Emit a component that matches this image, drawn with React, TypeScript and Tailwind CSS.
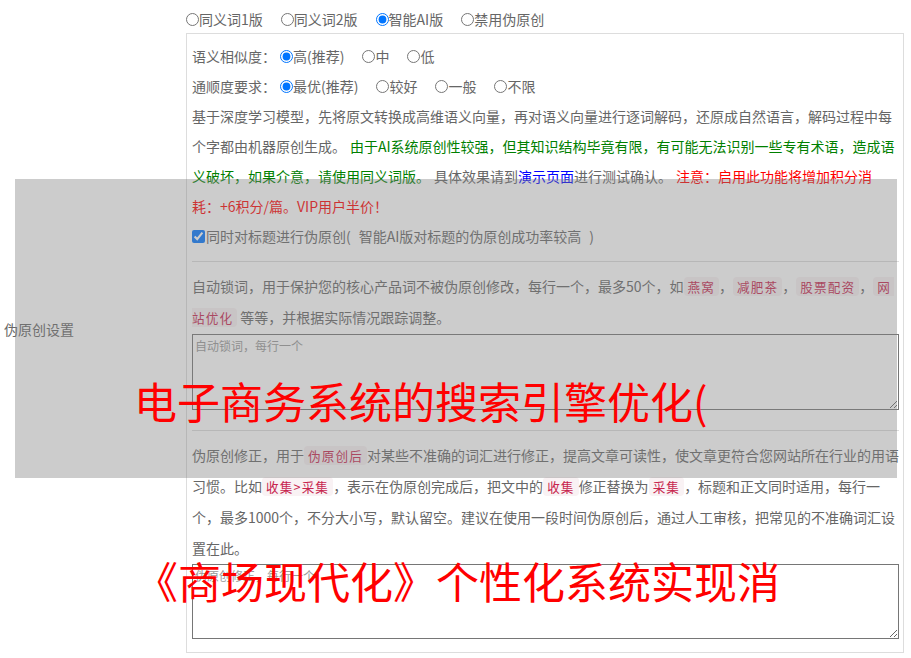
import React from "react";

function Code({ children, className = "" }: { children: React.ReactNode; className?: string }) {
  return (
    <span
      className={
        "inline-block leading-[15px] py-[2px] px-[4px] text-[12.6px] tracking-[1.15px] text-[#c7254e] bg-[#f9f2f4] rounded-[4px] " +
        className
      }
    >
      {children}
    </span>
  );
}

function Radio({
  name,
  label,
  checked = false,
  last = false,
}: {
  name: string;
  label: string;
  checked?: boolean;
  last?: boolean;
}) {
  return (
    <label className={"flex items-center " + (last ? "" : "mr-[18px]")}>
      <input type="radio" name={name} defaultChecked={checked} className="m-0 w-[13px] h-[13px]" />
      <span>{label}</span>
    </label>
  );
}

export default function App() {
  return (
    <div className="relative flex w-[911px] h-[658px] overflow-hidden bg-white text-[14px] text-[#666] font-['Noto_Sans_CJK_SC',sans-serif]">
      {/* left label column */}
      <div className="w-[186px] shrink-0 flex items-center pl-[4px]">伪原创设置</div>

      {/* right column */}
      <div className="w-[718px] shrink-0 flex flex-col">
        <div className="h-[33px] pt-[5px] flex items-center leading-[28px]">
          <Radio name="ver" label="同义词1版" />
          <Radio name="ver" label="同义词2版" />
          <Radio name="ver" label="智能AI版" checked />
          <Radio name="ver" label="禁用伪原创" last />
        </div>

        <div className="border border-[#ddd] pl-[5px] pr-[4px] pt-[7px] pb-[13px]">
          <div className="flex items-center h-[30px]">
            <span className="mr-[4px]">语义相似度：</span>
            <Radio name="sim" label="高(推荐)" checked />
            <Radio name="sim" label="中" />
            <Radio name="sim" label="低" last />
          </div>
          <div className="flex items-center h-[30px]">
            <span className="mr-[4px]">通顺度要求：</span>
            <Radio name="flu" label="最优(推荐)" checked />
            <Radio name="flu" label="较好" />
            <Radio name="flu" label="一般" />
            <Radio name="flu" label="不限" last />
          </div>

          <p className="leading-[30px] whitespace-nowrap">
            基于深度学习模型，先将原文转换成高维语义向量，再对语义向量进行逐词解码，还原成自然语言，解码过程中每
            <br />
            个字都由机器原创生成。
            <span className="ml-[4px] text-[#008000]">
              由于AI系统原创性较强，但其知识结构毕竟有限，有可能无法识别一些专有术语，造成语
              <br />
              义破坏，如果介意，请使用同义词版。
            </span>
            <span className="ml-[4px]">具体效果请到</span>
            <span className="text-[#0000ff]">演示页面</span>
            进行测试确认。
            <span className="ml-[4px] text-[#ff0000]">
              注意：启用此功能将增加积分消
              <br />
              耗：+6积分/篇。VIP用户半价！
            </span>
          </p>

          <label className="flex items-center h-[30px]">
            <input type="checkbox" defaultChecked className="m-0 w-[13px] h-[13px] mr-[1px]" />
            <span>
              同时对标题进行伪原创<span className="mr-[8px]">(</span>智能AI版对标题的伪原创成功率较高
              <span className="ml-[8px]">)</span>
            </span>
          </label>

          <div className="h-px bg-[#ddd] mt-[10px]" />

          <p className="mt-[9px] leading-[31px] whitespace-nowrap">
            自动锁词，用于保护您的核心产品词不被伪原创修改，每行一个，最多50个，如<Code>燕窝</Code>，
            <Code>减肥茶</Code>，<Code>股票配资</Code>，<Code className="pr-[3px] rounded-r-none">网</Code>
            <br />
            <Code className="pl-0 rounded-l-none">站优化</Code> 等等，并根据实际情况跟踪调整。
          </p>
          <textarea
            placeholder="自动锁词，每行一个"
            className="block mt-[1px] w-full h-[76px] border border-[#767676] p-[2px] text-[12px] bg-white placeholder:text-[#999]"
          />

          <div className="h-px bg-[#ddd] mt-[20px]" />

          <p className="mt-[9px] leading-[31px] whitespace-nowrap">
            伪原创修正，用于<Code>伪原创后</Code>对某些不准确的词汇进行修正，提高文章可读性，使文章更符合您网站所在行业的用语
            <br />
            习惯。比如<Code>收集&gt;采集</Code>，表示在伪原创完成后，把文中的<Code>收集</Code>修正替换为<Code>采集</Code>
            ，标题和正文同时适用，每行一
            <br />
            个，最多1000个，不分大小写，默认留空。建议在使用一段时间伪原创后，通过人工审核，把常见的不准确词汇设
            <br />
            置在此。
          </p>
          <textarea
            placeholder="伪原创修正，每行一个"
            className="block w-full h-[75px] border border-[#767676] p-[2px] text-[12px] bg-white placeholder:text-[#999]"
          />
        </div>
      </div>

      {/* gray overlay */}
      <div className="absolute left-[15px] top-[179px] w-[882px] h-[299px] bg-[rgba(128,128,128,0.4)]" />

      {/* big red overlay texts */}
      <div className="absolute left-[134px] top-[379px] text-[43px] leading-[43px] text-[#ff0000] whitespace-nowrap">
        电子商务系统的搜索引擎优化(
      </div>
      <div className="absolute left-[135px] top-[559px] text-[43px] leading-[43px] text-[#ff0000] whitespace-nowrap">
        《商场现代化》个性化系统实现消
      </div>
    </div>
  );
}
